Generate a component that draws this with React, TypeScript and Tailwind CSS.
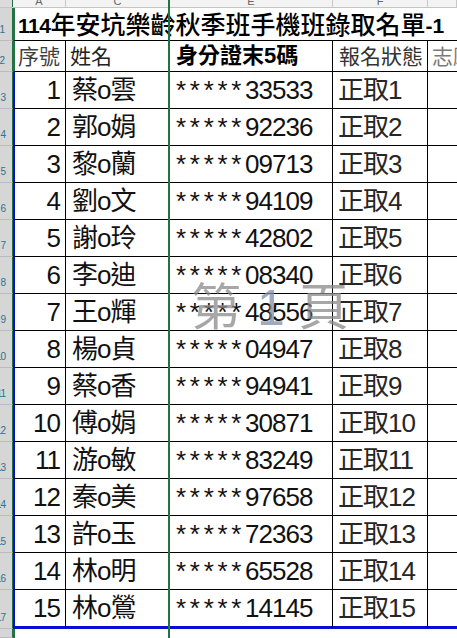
import React from "react";

type Row = { no: string; name: string; id: string; status: string };

const rows: Row[] = [
  { no: "1", name: "蔡o雲", id: "33533", status: "正取1" },
  { no: "2", name: "郭o娟", id: "92236", status: "正取2" },
  { no: "3", name: "黎o蘭", id: "09713", status: "正取3" },
  { no: "4", name: "劉o文", id: "94109", status: "正取4" },
  { no: "5", name: "謝o玲", id: "42802", status: "正取5" },
  { no: "6", name: "李o迪", id: "08340", status: "正取6" },
  { no: "7", name: "王o輝", id: "48556", status: "正取7" },
  { no: "8", name: "楊o貞", id: "04947", status: "正取8" },
  { no: "9", name: "蔡o香", id: "94941", status: "正取9" },
  { no: "10", name: "傅o娟", id: "30871", status: "正取10" },
  { no: "11", name: "游o敏", id: "83249", status: "正取11" },
  { no: "12", name: "秦o美", id: "97658", status: "正取12" },
  { no: "13", name: "許o玉", id: "72363", status: "正取13" },
  { no: "14", name: "林o明", id: "65528", status: "正取14" },
  { no: "15", name: "林o鶯", id: "14145", status: "正取15" },
];

const RowNum: React.FC<{ n?: string }> = ({ n }) => (
  <div className="flex w-[13px] shrink-0 items-end justify-end overflow-hidden border-r border-b border-r-[#217346] border-b-[#bcbcbc] bg-[#d6d6d6] pr-[7px] pb-[5px]">
    <span className="whitespace-nowrap text-[10px] leading-none text-[#2a7391]">{n}</span>
  </div>
);

const ColHead: React.FC<{ label?: string; className: string }> = ({ label, className }) => (
  <div className={`flex h-full justify-center overflow-hidden border-r border-[#c8c8c8] ${className}`}>
    <span className="-mt-[4px] text-[11px] leading-[11px] text-[#666]">{label}</span>
  </div>
);

export default function App() {
  return (
    <div className="relative flex h-[638px] w-[457px] flex-col overflow-hidden bg-white font-['Liberation_Sans','Noto_Sans_CJK_TC',sans-serif] text-[#111]">
      {/* column letters */}
      <div className="flex h-[8px] shrink-0 border-b border-[#c4c4c4] bg-[#f3f3f3]">
        <div className="w-[13px] shrink-0 border-r border-[#217346] bg-[#dcdcdc]" />
        <ColHead label="A" className="w-[53px] shrink-0" />
        <ColHead label="C" className="w-[104px] shrink-0" />
        <ColHead label="E" className="w-[163px] shrink-0" />
        <ColHead label="F" className="w-[95px] shrink-0" />
        <ColHead className="flex-1" />
      </div>

      {/* title row */}
      <div className="flex h-[33px] shrink-0">
        <RowNum n="1" />
        <div className="flex flex-1 items-center overflow-hidden whitespace-nowrap border-b border-l-2 border-b-black border-l-[#217346] pl-[3px] pt-[2px] text-[25px] font-medium leading-none text-black">
          <span className="text-[21px] font-bold tracking-[-0.5px]">114</span>
          <span>年安坑樂齡秋季班手機班錄取名單</span>
          <span className="text-[21px] font-bold">-1</span>
        </div>
      </div>

      {/* header row */}
      <div className="flex h-[31px] shrink-0 text-[21px] leading-none">
        <RowNum n="2" />
        <div className="flex w-[53px] shrink-0 items-center border-r border-b border-l-2 border-r-black border-b-black border-l-[#217346] pl-[3px] text-[#404040]">
          序號
        </div>
        <div className="flex w-[104px] shrink-0 items-center border-b border-black pl-[4px] text-[#222]">姓名</div>
        <div className="flex w-[163px] shrink-0 items-center border-r border-b border-black pl-[6px] text-[22px] font-bold text-black">
          身分證末5碼
        </div>
        <div className="flex w-[95px] shrink-0 items-center border-r border-b border-black pl-[6px] text-[#333]">
          報名狀態
        </div>
        <div className="flex flex-1 items-center overflow-hidden whitespace-nowrap border-b border-black pl-[4px] text-[#7a7a7a]">
          志願序
        </div>
      </div>

      {/* data rows */}
      {rows.map((r, i) => {
        const last = i === rows.length - 1;
        return (
          <div key={r.no} className={`flex shrink-0 text-[26px] leading-none tracking-[-1px] ${last ? "h-[39px]" : "h-[37px]"}`}>
            <RowNum n={String(i + 3)} />
            <div
              className={`flex w-[53px] shrink-0 items-center justify-end border-r border-l-2 border-r-black border-l-[#0b0bd4] pr-[5px] ${
                last ? "border-b-[3px] border-b-[#0b0bd4]" : "border-b border-b-black"
              }`}
            >
              {r.no}
            </div>
            <div
              className={`flex w-[104px] shrink-0 items-center pl-[6px] ${
                last ? "border-b-[3px] border-b-[#0b0bd4]" : "border-b border-b-black"
              }`}
            >
              {r.name}
            </div>
            <div
              className={`flex w-[163px] shrink-0 items-center border-r border-r-black pl-[6px] ${
                last ? "border-b-[3px] border-b-[#0b0bd4]" : "border-b border-b-black"
              }`}
            >
              <span className="tracking-[3.7px]">*****</span>
              <span>{r.id}</span>
            </div>
            <div
              className={`flex w-[95px] shrink-0 items-center border-r border-r-black pl-[5px] text-[#262626] ${
                last ? "border-b-[3px] border-b-[#0b0bd4]" : "border-b border-b-black"
              }`}
            >
              {r.status}
            </div>
            <div className={`flex-1 ${last ? "border-b-[3px] border-b-[#0b0bd4]" : "border-b border-b-black"}`} />
          </div>
        );
      })}

      {/* below print area */}
      <div className="flex flex-1">
        <RowNum />
        <div className="flex-1 border-l-2 border-[#217346]" />
      </div>

      {/* page column break */}
      <div className="pointer-events-none absolute top-0 left-[168px] h-full w-[2px] bg-[#217346]" />

      {/* page watermark */}
      <div className="pointer-events-none absolute top-[283px] left-[191px] flex items-baseline text-[50px] leading-none text-[#8a8a8a] opacity-75">
        <span>第</span>
        <span className="ml-[16px] font-['Liberation_Sans'] text-[#7f90a8]">1</span>
        <span className="ml-[14px]">頁</span>
      </div>
    </div>
  );
}
